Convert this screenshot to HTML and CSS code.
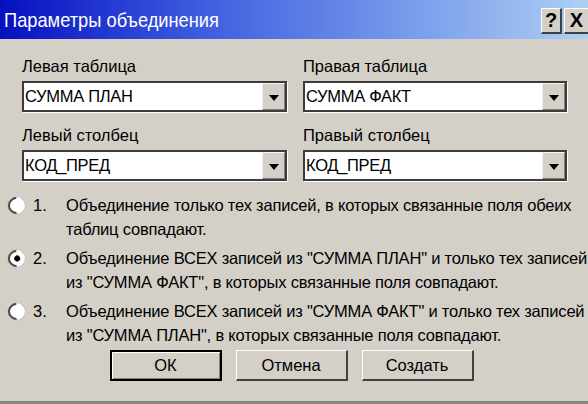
FILE: index.html
```html
<!DOCTYPE html>
<html>
<head>
    <title>Параметры объединения</title>
    <link rel="stylesheet" href="styles.css">
</head>
<body>
    <div class="window">
        <div class="titlebar">
            <span class="title">Параметры объединения</span>
            <div class="caption-buttons">
                <span class="cap-btn">?</span>
                <span class="cap-btn">X</span>
            </div>
        </div>

        <div class="fields">
            <div class="field">
                <label>Левая таблица</label>
                <div class="combo"><span class="value">СУММА ПЛАН</span><span class="drop"><span class="arrow"></span></span></div>
            </div>
            <div class="field">
                <label>Правая таблица</label>
                <div class="combo"><span class="value">СУММА ФАКТ</span><span class="drop"><span class="arrow"></span></span></div>
            </div>
            <div class="field">
                <label>Левый столбец</label>
                <div class="combo"><span class="value">КОД_ПРЕД</span><span class="drop"><span class="arrow"></span></span></div>
            </div>
            <div class="field">
                <label>Правый столбец</label>
                <div class="combo"><span class="value">КОД_ПРЕД</span><span class="drop"><span class="arrow"></span></span></div>
            </div>
        </div>

        <div class="options">
            <div class="option">
                <span class="radio"></span>
                <span class="num">1.</span>
                <span class="text">Объединение только тех записей, в которых связанные поля обеих<br>таблиц совпадают.</span>
            </div>
            <div class="option">
                <span class="radio checked"></span>
                <span class="num">2.</span>
                <span class="text">Объединение ВСЕХ записей из "СУММА ПЛАН" и только тех записей<br>из "СУММА ФАКТ", в которых связанные поля совпадают.</span>
            </div>
            <div class="option">
                <span class="radio"></span>
                <span class="num">3.</span>
                <span class="text">Объединение ВСЕХ записей из "СУММА ФАКТ" и только тех записей<br>из "СУММА ПЛАН", в которых связанные поля совпадают.</span>
            </div>
        </div>

        <div class="buttons">
            <button class="default">ОК</button>
            <button>Отмена</button>
            <button>Создать</button>
        </div>
    </div>
</body>
</html>
```

FILE: styles.css
```css
body {
    margin: 0;
    font-family: "Liberation Sans", Arial, sans-serif;
    background: #d4d0c8;
}
.window {
    width: 588px;
    height: 404px;
    background: #d4d0c8;
    border-bottom: 3px solid #8a8884;
    box-sizing: border-box;
    overflow: hidden;
}
.titlebar {
    height: 39px;
    background: linear-gradient(to right, #0610c0 0%, #3f5ee0 35%, #acd0f4 100%);
    display: flex;
    align-items: center;
    justify-content: space-between;
    padding-left: 4px;
}
.title {
    color: white;
    font-size: 21px;
    display: inline-block;
    transform: scaleX(0.87);
    transform-origin: left center;
}
.caption-buttons {
    display: flex;
    gap: 2px;
    align-self: flex-start;
    margin-top: 8px;
}
.cap-btn {
    width: 21px;
    height: 26px;
    box-sizing: border-box;
    background: #d4d0c8;
    border-top: 1px solid #fff;
    border-left: 1px solid #fff;
    border-right: 2px solid #404040;
    border-bottom: 2px solid #404040;
    font-weight: bold;
    font-size: 20px;
    line-height: 23px;
    text-align: center;
    color: #000;
}
.cap-btn:last-child {
    width: 24px;
    border-right: none;
}
.fields {
    display: grid;
    grid-template-columns: 265px 264px;
    column-gap: 16px;
    row-gap: 13px;
    margin: 17px 0 0 22px;
}
.field {
    display: flex;
    flex-direction: column;
    gap: 5px;
}
.field label {
    font-size: 16.5px;
    line-height: 20px;
    color: #000;
}
.combo {
    height: 31px;
    box-sizing: border-box;
    background: white;
    border: 2px solid #3c3c3c;
    box-shadow: 1px 1px 0 #fff;
    display: flex;
    align-items: center;
    justify-content: space-between;
}
.value {
    font-size: 16.5px;
    padding-left: 1px;
    letter-spacing: -0.3px;
}
.drop {
    width: 23px;
    height: 27px;
    box-sizing: border-box;
    background: #d4d0c8;
    border-top: 1px solid #f4f4f4;
    border-left: 1px solid #f4f4f4;
    border-right: 1px solid #808080;
    border-bottom: 1px solid #808080;
    display: flex;
    align-items: center;
    justify-content: center;
}
.arrow {
    width: 0;
    height: 0;
    border-left: 5px solid transparent;
    border-right: 5px solid transparent;
    border-top: 6px solid #000;
    margin-top: 2px;
}
.options {
    display: flex;
    flex-direction: column;
    gap: 5px;
    margin-top: 12px;
}
.option {
    display: flex;
    align-items: flex-start;
    font-size: 16.5px;
    line-height: 24px;
}
.radio {
    width: 17px;
    height: 17px;
    box-sizing: border-box;
    border-radius: 50%;
    background: white;
    border: 2px solid;
    border-color: #4a4a4a #ffffff #ffffff #4a4a4a;
    box-shadow: 0 0 0 0.5px #b8b6b0;
    margin: 4px 0 0 8px;
    flex: none;
    display: flex;
    align-items: center;
    justify-content: center;
    transform: rotate(-45deg);
}
.radio.checked::after {
    content: "";
    width: 6px;
    height: 6px;
    border-radius: 50%;
    background: #000;
}
.num {
    width: 33px;
    margin-left: 8px;
    flex: none;
}
.text {
    white-space: nowrap;
    letter-spacing: -0.2px;
}
.buttons {
    display: flex;
    justify-content: center;
    gap: 14px;
    margin-top: 3px;
    padding-right: 5px;
}
button {
    width: 112px;
    height: 31px;
    background: #d4d0c8;
    font-family: "Liberation Sans", Arial, sans-serif;
    font-size: 16.5px;
    color: #000;
    border-top: 1px solid #fff;
    border-left: 1px solid #fff;
    border-right: 2px solid #404040;
    border-bottom: 2px solid #404040;
    padding: 0;
}
button.default {
    border: 2px solid #000;
    box-shadow: inset 1px 1px 0 #fff, inset -1px -1px 0 #808080;
}
```
